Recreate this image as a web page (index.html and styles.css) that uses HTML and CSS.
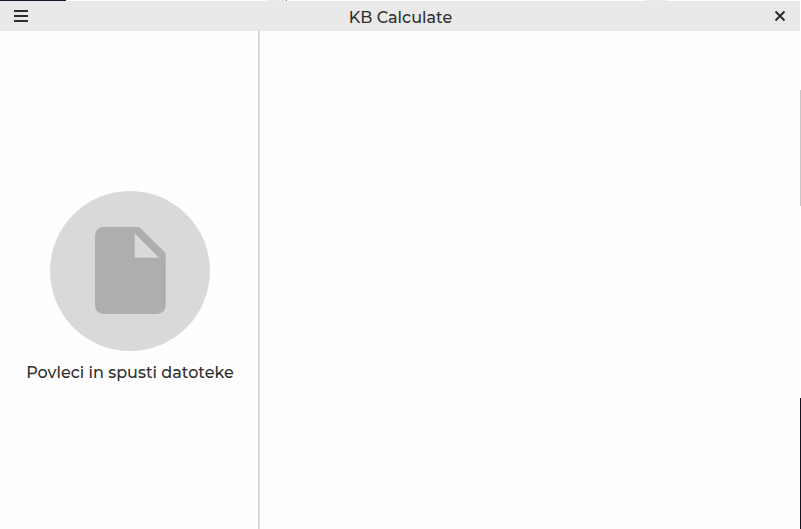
FILE: index.html
```
<!DOCTYPE html>
<html lang="sl">
<head>
<meta charset="utf-8">
<title>KB Calculate</title>
<link rel="stylesheet" href="styles.css">
</head>
<body>
<div class="window">
  <header class="titlebar">
    <button class="tool" type="button" aria-label="Meni">
      <svg width="14" height="12" viewBox="0 0 14 12" shape-rendering="crispEdges"><path d="M0 0h14v2H0zM0 5h14v2H0zM0 10h14v2H0z"/></svg>
    </button>
    <h1 class="title">KB Calculate</h1>
    <button class="tool" type="button" aria-label="Zapri">
      <svg width="12" height="12" viewBox="0 0 12 12"><path class="cross" d="M1.500 1.500l9 9M10.500 1.500l-9 9"/></svg>
    </button>
  </header>
  <div class="content">
    <aside class="dropzone">
      <div class="disc">
        <svg width="70" height="88" viewBox="0 0 70 88"><path fill-rule="evenodd" d="M8.500 0H44L70.700 26V78.500a8.500 8.500 0 0 1-8.500 8.500H8.500A8.500 8.500 0 0 1 0 78.500V8.500A8.500 8.500 0 0 1 8.500 0zM39.700 6.500V30.700H64z"/></svg>
      </div>
      <p class="hint">Povleci in spusti datoteke</p>
    </aside>
    <main class="workspace"></main>
  </div>
</div>
</body>
</html>
```
FILE: styles.css
```
* { box-sizing: border-box; }

body {
  margin: 0;
  min-height: 100vh;
  display: flex;
  padding: 1px 1px 0 0;
  color: #303030;
  font-family: Montserrat, Inter, sans-serif;
  font-size: 16px;
  font-weight: 500;
  line-height: 24px;
  /* slivers of the desktop behind the window */
  background:
    linear-gradient(90deg, #1c1228 66px, #fff 66px 266px, #ebebeb 266px 286px, #777 286px 287px, #fff 287px 646px, #ebebeb 646px 666px, #fff 666px) top / 100% 1px no-repeat,
    linear-gradient(#fff 90px, #c8c8c8 90px 206px, #fff 206px 398px, #151020 398px) right / 1px 100% no-repeat,
    #fff;
}

.window {
  flex: 1;
  display: flex;
  flex-direction: column;
  background: #fefefe;
}

.titlebar {
  display: flex;
  align-items: center;
  justify-content: space-between;
  height: 30px;
  padding: 0 5px 0 6px;
  background: #e9e9e9;
}

.title {
  margin: 0;
  padding-top: 4px;
  font-size: inherit;
  font-weight: inherit;
}

.tool {
  display: flex;
  align-items: center;
  justify-content: center;
  width: 30px;
  height: 30px;
  padding: 0;
  border: 0;
  background: none;
  fill: #2c2f2c;
}

.cross {
  fill: none;
  stroke: #2c2f2c;
  stroke-width: 2;
}

.content {
  flex: 1;
  display: flex;
}

.dropzone {
  display: flex;
  flex-direction: column;
  align-items: center;
  gap: 10px;
  width: 260px;
  padding-top: 160px;
  box-shadow: inset -2px 0 #d8d8d8;
}

.disc {
  display: flex;
  align-items: center;
  justify-content: center;
  width: 160px;
  height: 160px;
  border-radius: 50%;
  background: #d9d9d9;
  fill: #aeaeae;
}

.disc svg { overflow: visible; }

.hint { margin: 0; }

.workspace { flex: 1; }
```
